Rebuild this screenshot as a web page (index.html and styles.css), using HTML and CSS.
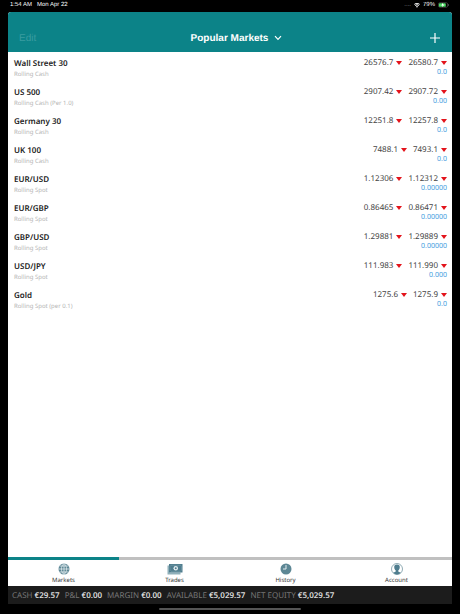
FILE: index.html
```html
<!DOCTYPE html>
<html lang="en">
<head>
    <meta charset="UTF-8">
    <meta name="viewport" content="width=device-width, initial-scale=1.0">
    <title>Popular Markets</title>
    <link rel="stylesheet" href="styles.css">
</head>
<body>
    <div class="status-bar">
        <span>1:54 AM</span>
        <span>Mon Apr 22</span>
        <div class="status-right">
            <span class="signal">....</span>
            <svg class="wifi" viewBox="0 0 14 10"><path d="M7 10L4.6 7.3a3.6 3.6 0 0 1 4.8 0zM3.5 6a5.2 5.2 0 0 1 7 0l1.3-1.5a7.2 7.2 0 0 0-9.6 0zM1.2 3.4a8.7 8.7 0 0 1 11.6 0L14 2a10.5 10.5 0 0 0-14 0z" fill="#fff"/></svg>
            <span>79%</span>
            <svg class="battery" viewBox="0 0 24 12"><rect x="1" y="1" width="20" height="10" rx="3" fill="none" stroke="#777"/><rect x="2" y="2" width="15" height="8" rx="2" fill="#4cd964"/><path d="M11 1L7 7h3l-1 4 5-6h-3z" fill="#fff"/><path d="M22.500 4v4" stroke="#777" stroke-width="1.500"/></svg>
        </div>
    </div>

    <div class="app">
        <header>
            <button class="edit" disabled>Edit</button>
            <h1>
                <button class="picker">Popular Markets
                    <svg viewBox="0 0 8 6"><path d="M1 1.200l3 3.200 3-3.200" fill="none" stroke="#fff" stroke-width="1.200"/></svg>
                </button>
            </h1>
            <button class="add" aria-label="Add market">
                <svg viewBox="0 0 12 12"><path d="M6 1v10M1 6h10" stroke="#fff" stroke-width="1.200"/></svg>
            </button>
        </header>

        <main>
            <ul class="markets">
                <li class="market">
                    <div class="info"><h2>Wall Street 30</h2><p>Rolling Cash</p></div>
                    <div class="quote"><div class="prices"><span class="price down">26576.7</span><span class="price down">26580.7</span></div><span class="change">0.0</span></div>
                </li>
                <li class="market">
                    <div class="info"><h2>US 500</h2><p>Rolling Cash (Per 1.0)</p></div>
                    <div class="quote"><div class="prices"><span class="price down">2907.42</span><span class="price down">2907.72</span></div><span class="change">0.00</span></div>
                </li>
                <li class="market">
                    <div class="info"><h2>Germany 30</h2><p>Rolling Cash</p></div>
                    <div class="quote"><div class="prices"><span class="price down">12251.8</span><span class="price down">12257.8</span></div><span class="change">0.0</span></div>
                </li>
                <li class="market">
                    <div class="info"><h2>UK 100</h2><p>Rolling Cash</p></div>
                    <div class="quote"><div class="prices"><span class="price down">7488.1</span><span class="price down">7493.1</span></div><span class="change">0.0</span></div>
                </li>
                <li class="market">
                    <div class="info"><h2>EUR/USD</h2><p>Rolling Spot</p></div>
                    <div class="quote"><div class="prices"><span class="price down">1.12306</span><span class="price down">1.12312</span></div><span class="change">0.00000</span></div>
                </li>
                <li class="market">
                    <div class="info"><h2>EUR/GBP</h2><p>Rolling Spot</p></div>
                    <div class="quote"><div class="prices"><span class="price down">0.86465</span><span class="price down">0.86471</span></div><span class="change">0.00000</span></div>
                </li>
                <li class="market">
                    <div class="info"><h2>GBP/USD</h2><p>Rolling Spot</p></div>
                    <div class="quote"><div class="prices"><span class="price down">1.29881</span><span class="price down">1.29889</span></div><span class="change">0.00000</span></div>
                </li>
                <li class="market">
                    <div class="info"><h2>USD/JPY</h2><p>Rolling Spot</p></div>
                    <div class="quote"><div class="prices"><span class="price down">111.983</span><span class="price down">111.990</span></div><span class="change">0.000</span></div>
                </li>
                <li class="market">
                    <div class="info"><h2>Gold</h2><p>Rolling Spot (per 0.1)</p></div>
                    <div class="quote"><div class="prices"><span class="price down">1275.6</span><span class="price down">1275.9</span></div><span class="change">0.0</span></div>
                </li>
            </ul>
        </main>

        <nav class="tabs">
            <a class="tab active" href="#markets">
                <svg viewBox="0 0 24 24"><circle cx="12" cy="12" r="11" fill="#5d8795"/><path d="M12 1v22M1 12h22M3 6h18M3 18h18M12 1c-7 6-7 16 0 22M12 1c7 6 7 16 0 22" fill="none" stroke="#e4edf0" stroke-width="1.500"/></svg>
                Markets
            </a>
            <a class="tab" href="#trades">
                <svg class="wide" viewBox="0 0 32 24"><path d="M1 5h4v14h22v4H1z" fill="#8fb0ba"/><rect x="4" y="2" width="27" height="17" fill="#4f7d8e"/><path d="M8 4.500h19l2 2v8l-2 2H8l-2-2v-8z" fill="none" stroke="#7fa3ae"/><circle cx="17.500" cy="10.500" r="4.500" fill="#e4edf0"/><circle cx="17.500" cy="10.500" r="2" fill="#4f7d8e"/></svg>
                Trades
            </a>
            <a class="tab" href="#history">
                <svg viewBox="0 0 24 24"><circle cx="12" cy="12" r="11" fill="#5d8795"/><path d="M12 4v8H6" fill="none" stroke="#e4edf0" stroke-width="2"/></svg>
                History
            </a>
            <a class="tab" href="#account">
                <svg viewBox="0 0 24 24"><circle cx="12" cy="12" r="11" fill="#fff" stroke="#6d929e" stroke-width="1.500"/><path d="M12 3c-4 0-6 2.500-5.500 6 .2 2.500 1.500 4.500 3 6v2c-2 1-4 1.500-5 2.500 4 4.500 11 4.500 15 0-1-1-3-1.500-5-2.500v-2c1.500-1.500 2.800-3.500 3-6C18 5.500 16 3 12 3z" fill="#4f7d8e"/></svg>
                Account
            </a>
        </nav>

        <footer>
            <span>CASH <b>€29.57</b></span>
            <span>P&amp;L <b>€0.00</b></span>
            <span>MARGIN <b>€0.00</b></span>
            <span>AVAILABLE <b>€5,029.57</b></span>
            <span>NET EQUITY <b>€5,029.57</b></span>
        </footer>
    </div>
    <div class="home-bar"></div>
</body>
</html>
```
FILE: styles.css
```css
:root{
    --teal:#0c8388;
    --red:#e3131b;
    --blue:#3d9ade;
}

*{
    box-sizing: border-box;
    margin: 0;
    padding: 0;
}

body{
    display: flex;
    flex-direction: column;
    min-height: 100vh;
    padding: 0 8px;
    background: #000;
    font-family: "Noto Sans", "Open Sans", sans-serif;
    text-rendering: geometricPrecision;
}

button{
    border: none;
    background: none;
    color: #fff;
    font-family: inherit;
    text-rendering: inherit;
}

svg{
    display: block;
}

.status-bar{
    display: flex;
    align-items: center;
    gap: 5px;
    height: 12px;
    padding: 0 3px 2px 2px;
    color: #fff;
    font-family: "Liberation Sans", sans-serif;
    font-size: 6px;
}

.status-right{
    display: flex;
    align-items: center;
    gap: 3px;
    margin-left: auto;
}

.signal{
    color: #999;
}

.wifi{
    width: 6px;
    height: 5px;
}

.battery{
    width: 11px;
    height: 6px;
}

.app{
    display: flex;
    flex-direction: column;
    flex: 1;
    overflow: hidden;
    border-radius: 3px 3px 0 0;
    background: #fff;
}

header{
    display: grid;
    grid-template-columns: 1fr auto 1fr;
    align-items: center;
    padding: 16px 11px 4px;
    height: 40px;
    background: var(--teal);
    font-family: "Liberation Sans", sans-serif;
}

header h1{
    font-size: 10px;
    line-height: 12px;
}

.edit{
    justify-self: start;
    color: #3a9ca0;
    font-size: 10px;
}

.picker{
    display: flex;
    align-items: center;
    gap: 6px;
    padding-left: 13px;
    font-size: 10px;
    font-weight: 700;
}

.picker svg{
    width: 8px;
    height: 6px;
}

.add{
    justify-self: end;
}

.add svg{
    width: 12px;
    height: 12px;
}

main{
    flex: 1;
}

.markets{
    list-style: none;
}

.market{
    display: flex;
    justify-content: space-between;
    height: 29px;
    padding: 6px 5px 0 6px;
}

.market h2{
    color: #222;
    font-size: 8px;
    font-weight: 600;
    line-height: 12px;
}

.market p{
    color: #b4b4b4;
    font-size: 6px;
    line-height: 8px;
}

.quote{
    display: flex;
    flex-direction: column;
    align-items: flex-end;
}

.prices{
    display: flex;
    gap: 6px;
    color: #444;
    font-size: 8px;
    line-height: 10px;
}

.price{
    display: flex;
    align-items: center;
    gap: 3px;
}

.down::after{
    content: "";
    border: 3px solid transparent;
    border-top: 4px solid var(--red);
    border-bottom: 0;
}

.change{
    color: var(--blue);
    font-size: 7px;
    line-height: 9px;
}

.tabs{
    display: grid;
    grid-template-columns: repeat(4, 1fr);
}

.tab{
    display: flex;
    flex-direction: column;
    align-items: center;
    gap: 1px;
    padding: 3px 0 2px;
    border-top: 3px solid #c0c0c0;
    color: #333;
    font-size: 6px;
    line-height: 8px;
    text-decoration: none;
}

.tab.active{
    border-top-color: var(--teal);
}

.tab svg{
    width: 12px;
    height: 12px;
}

.tab .wide{
    width: 16px;
}

footer{
    display: flex;
    align-items: center;
    gap: 5px;
    height: 18px;
    padding: 0 4px;
    background: #1c1c1c;
    color: #777;
    font-size: 8px;
    white-space: nowrap;
}

footer b{
    color: #ddd;
    font-weight: 600;
}

.home-bar{
    align-self: center;
    width: 32%;
    height: 2px;
    margin: 4px 0;
    border-radius: 1px;
    background: #555;
}
```
